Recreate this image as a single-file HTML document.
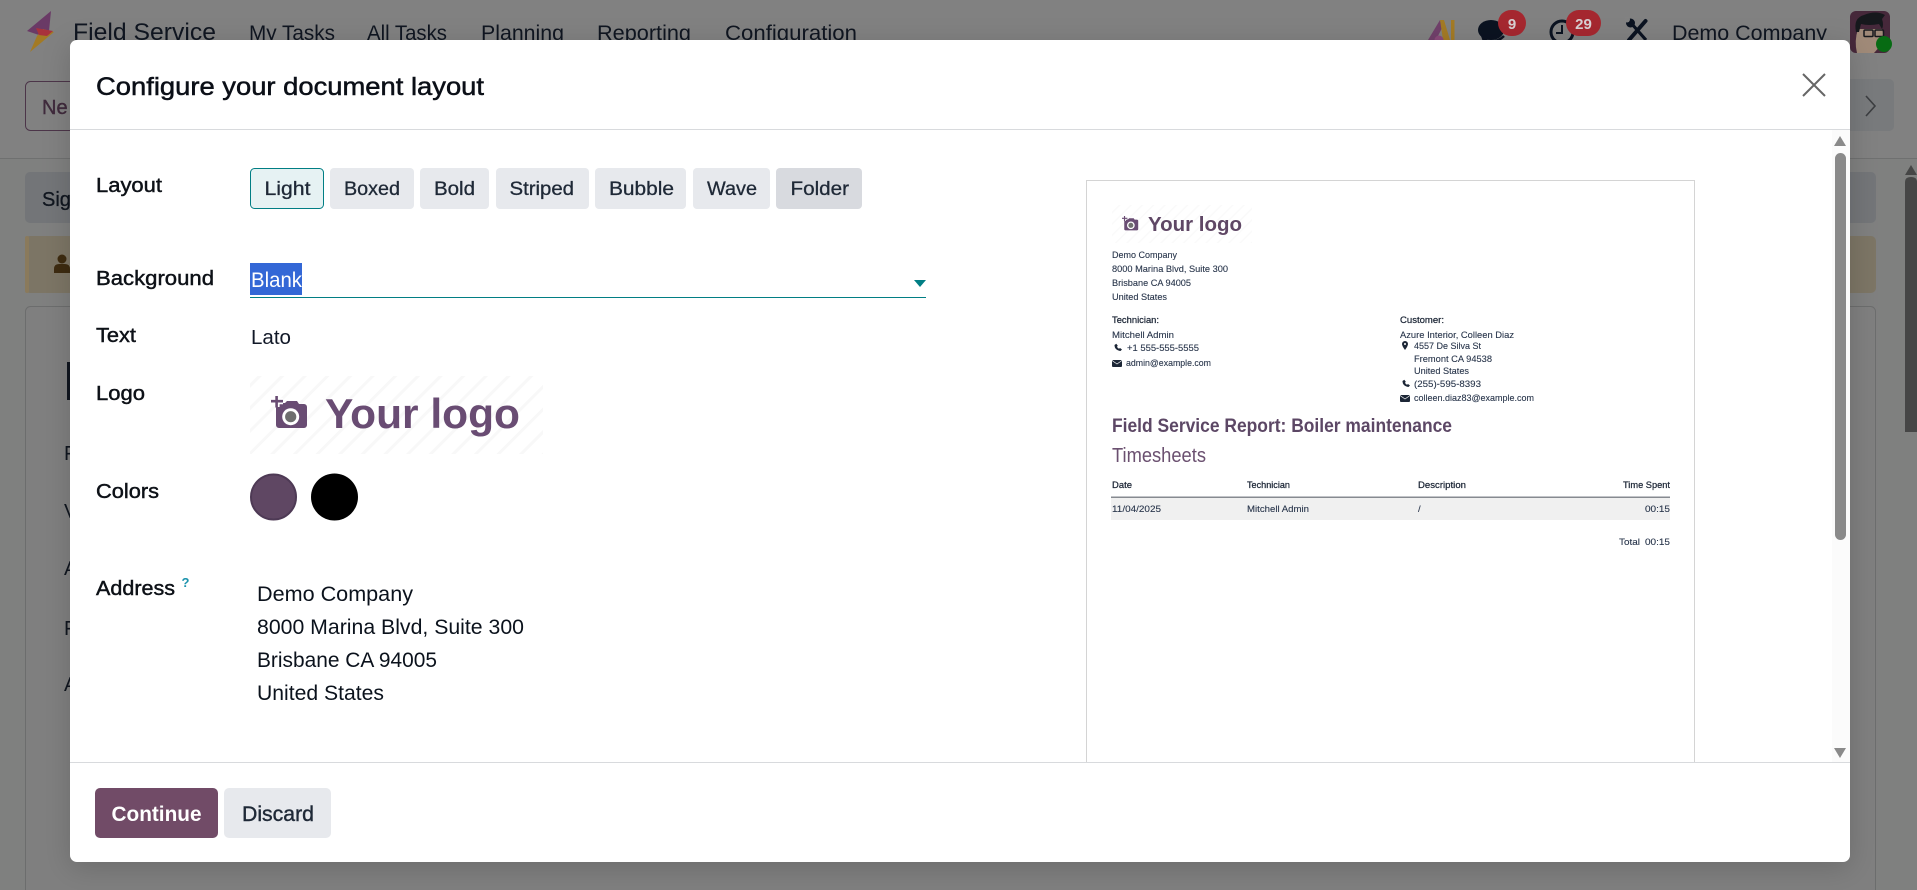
<!DOCTYPE html>
<html lang="en"><head><meta charset="utf-8"><title>Configure your document layout</title>
<style>
html,body{margin:0;padding:0;width:1917px;height:890px;overflow:hidden;background:#7f807f}
svg{display:block}
text{font-family:"Liberation Sans",sans-serif;white-space:pre}
.l{font-size:20px;fill:#0d1117;stroke:#0d1117;stroke-width:.45}
.b{font-size:19px;fill:#1f2937;stroke:#1f2937;stroke-width:.3}
.a{font-size:20px;fill:#111827}
.n{font-size:21px;fill:#0b121c}
.s{font-size:9.5px;fill:#27344a;stroke:#27344a;stroke-width:.1}
.sb{font-size:9.5px;fill:#1c2636;stroke:#1c2636;stroke-width:.25}
</style></head><body>
<svg width="1917" height="890" viewBox="0 0 1917 890" xmlns="http://www.w3.org/2000/svg">
<defs>
<pattern id="st" width="16" height="16" patternUnits="userSpaceOnUse" patternTransform="rotate(45)"><rect width="16" height="16" fill="#fff"/><rect x="0" width="3" height="16" fill="#f8f8f8"/></pattern>
<pattern id="st2" width="8" height="8" patternUnits="userSpaceOnUse" patternTransform="rotate(45)"><rect width="8" height="8" fill="#fff"/><rect x="0" width="1.5" height="8" fill="#fafafa"/></pattern>
<g id="cam">
<path d="M7 7h7l2-2h10l2 3h5a3 3 0 0 1 3 3v18a3 3 0 0 1-3 3H8a3 3 0 0 1-3-3V12z" fill="#694c73"/>
<path d="M0 5.2h12M5.6 0v11" stroke="#fff" stroke-width="6"/>
<path d="M0 5.2h12M5.6 0v11.5" stroke="#694c73" stroke-width="2.6"/>
<circle cx="19.7" cy="20.7" r="8.5" fill="#fff"/><circle cx="19.7" cy="20.7" r="5.6" fill="#6e6e6e"/>
</g>
<filter id="sh" x="-5%" y="-5%" width="110%" height="115%"><feDropShadow dx="0" dy="6" stdDeviation="14" flood-color="#000" flood-opacity=".16"/></filter>
</defs>

<!-- background page -->
<rect width="1917" height="890" fill="#7f807f"/>
<rect width="1917" height="158" fill="#818181"/>
<rect y="158" width="1917" height="1" fill="#6f7070"/>
<path d="M51 11 27 31 39 35 49 31z" fill="#6a3a66"/>
<path d="M30 52 54 32 43 29 37 36z" fill="#a37a24"/>
<path d="M36 28 53 31 47 36 39 35z" fill="#a8323c"/>
<text x="73" y="40" font-size="24" fill="#0f1520" textLength="143" lengthAdjust="spacingAndGlyphs">Field Service</text>
<g font-size="21" fill="#0f1520">
<text x="249" y="40" textLength="86" lengthAdjust="spacingAndGlyphs">My Tasks</text>
<text x="367" y="40" textLength="80" lengthAdjust="spacingAndGlyphs">All Tasks</text>
<text x="481" y="40" textLength="83" lengthAdjust="spacingAndGlyphs">Planning</text>
<text x="597" y="40" textLength="94" lengthAdjust="spacingAndGlyphs">Reporting</text>
<text x="725" y="40" textLength="132" lengthAdjust="spacingAndGlyphs">Configuration</text>
<text x="1672" y="40" textLength="155" lengthAdjust="spacingAndGlyphs">Demo Company</text>
</g>
<!-- AI -->
<path d="M1428 40 1440 20 1442 28 1436 40z" fill="#70406a"/><path d="M1440 20h4l6 20h-7z" fill="#a37a24"/><rect x="1451" y="20" width="3.5" height="20" fill="#a37a24"/><circle cx="1439" cy="40" r="4.500" fill="#8a4a7a"/>
<!-- chat -->
<ellipse cx="1491" cy="30" rx="13" ry="10" fill="#0a1220"/><path d="M1481 36 1483 42 1490 38z" fill="#0a1220"/><path d="M1484 40q12 4 20-4" stroke="#0a1220" stroke-width="2.5" fill="none"/>
<rect x="1498" y="10" width="28" height="26" rx="13" fill="#a5272f"/>
<text x="1512" y="29" text-anchor="middle" font-size="15" font-weight="bold" fill="#d8d0d2">9</text>
<!-- clock -->
<circle cx="1562" cy="32" r="11" fill="none" stroke="#0a1220" stroke-width="3"/><path d="M1562 25v8h-6" stroke="#0a1220" stroke-width="2" fill="none"/>
<rect x="1566" y="10" width="35" height="26" rx="13" fill="#a5272f"/>
<text x="1583.500" y="29" text-anchor="middle" font-size="15" font-weight="bold" fill="#d8d0d2">29</text>
<!-- tools -->
<path d="M1631 23 1646 40" stroke="#0a1220" stroke-width="3.200" fill="none"/>
<circle cx="1630.500" cy="23" r="4.500" fill="#0a1220"/><circle cx="1627" cy="19.500" r="3" fill="#828282"/>
<path d="M1645.500 21 1629 40" stroke="#0a1220" stroke-width="4" stroke-linecap="round" fill="none"/>
<!-- avatar -->
<rect x="1850" y="11" width="40" height="42" rx="6" fill="#46283a"/>
<path d="M1857 53q-3-12 1-24h24q3 8 0 15l-8 9z" fill="#a08a78"/>
<path d="M1856 32q-3-14 8-17 12-5 21 0l-3 4q2 6 0 10l-3-5q-10 2-18 0l-2 8z" fill="#16181c"/>
<rect x="1864" y="30" width="9" height="6.500" rx="1" fill="none" stroke="#16181c" stroke-width="1.500"/><rect x="1875" y="30" width="8.500" height="6.500" rx="1" fill="none" stroke="#16181c" stroke-width="1.500"/>
<circle cx="1884" cy="44" r="8" fill="#076b13"/>
<!-- control panel -->
<rect x="25.500" y="81.500" width="70" height="49" rx="5" fill="none" stroke="#4c3549"/>
<text x="42" y="114" font-size="20" fill="#3f2a3c" stroke="#3f2a3c" stroke-width=".4">Ne</text>
<rect x="1820" y="79" width="74" height="52" rx="5" fill="#787a7c"/>
<path d="M1866 96l9 10-9 10" fill="none" stroke="#3b3d40" stroke-width="1.600"/>
<rect x="25" y="172" width="1851" height="51" rx="5" fill="#737578"/>
<text x="42" y="206" font-size="20" fill="#10161f" stroke="#10161f" stroke-width=".3">Sig</text>
<rect x="25" y="236" width="1851" height="57" rx="5" fill="#7c7565"/>
<rect x="25" y="236" width="4" height="57" rx="2" fill="#8a7a5c"/>
<circle cx="62" cy="259" r="4.500" fill="#3d2b10"/><path d="M54 273v-4q0-5 5-5h6q5 0 5 5v4z" fill="#3d2b10"/>
<rect x="25.500" y="306.500" width="1850" height="600" rx="5" fill="#7f7f7f" stroke="#6c6d6d"/>
<rect x="67" y="362" width="3" height="38" fill="#10161f"/>
<g font-size="20" fill="#10161f">
<text x="64" y="460">F</text><text x="64" y="518">V</text><text x="64" y="575">A</text><text x="64" y="635">F</text><text x="64" y="691">A</text>
</g>
<path d="M1905 182q0-5 6-5t6 5v250h-12z" fill="#464646"/>
<path d="M1905 175 1911 165 1917 175z" fill="#464646"/>

<!-- modal -->
<rect x="70" y="40" width="1780" height="822" rx="7" fill="#fff" filter="url(#sh)"/>
<text x="96" y="95" font-size="25" fill="#0b0f17" stroke="#0b0f17" stroke-width=".5" textLength="388" lengthAdjust="spacingAndGlyphs">Configure your document layout</text>
<path d="M1803 74 1825 96M1825 74 1803 96" stroke="#666" stroke-width="2" fill="none"/>
<rect x="70" y="129" width="1780" height="1" fill="#d8dadd"/>
<rect x="1832" y="130" width="18" height="632" fill="#fbfbfb"/>
<path d="M1834 146 1840 136 1846 146z" fill="#8a8a8a"/>
<rect x="1835" y="153" width="11" height="387" rx="5.500" fill="#8a8a8a"/>
<path d="M1834 748 1840 758 1846 748z" fill="#8a8a8a"/>
<rect x="70" y="762" width="1780" height="1" fill="#d8dadd"/>

<!-- labels -->
<text class="l" x="96" y="192" textLength="66" lengthAdjust="spacingAndGlyphs">Layout</text>
<text class="l" x="96" y="285" textLength="118" lengthAdjust="spacingAndGlyphs">Background</text>
<text class="l" x="96" y="342" textLength="40" lengthAdjust="spacingAndGlyphs">Text</text>
<text class="l" x="96" y="400" textLength="49" lengthAdjust="spacingAndGlyphs">Logo</text>
<text class="l" x="96" y="498" textLength="63" lengthAdjust="spacingAndGlyphs">Colors</text>
<text class="l" x="96" y="595" textLength="79" lengthAdjust="spacingAndGlyphs">Address</text>
<text x="181.500" y="587" font-size="13" font-weight="bold" fill="#1b93ad">?</text>

<!-- layout buttons -->
<rect x="250.500" y="168.500" width="73" height="40" rx="4" fill="#e6f2f3" stroke="#017e84"/>
<rect x="330" y="168" width="84" height="41" rx="4" fill="#e7e9ed"/>
<rect x="420" y="168" width="69" height="41" rx="4" fill="#e7e9ed"/>
<rect x="496" y="168" width="93" height="41" rx="4" fill="#e7e9ed"/>
<rect x="595" y="168" width="91" height="41" rx="4" fill="#e7e9ed"/>
<rect x="693" y="168" width="77" height="41" rx="4" fill="#e7e9ed"/>
<rect x="776" y="168" width="86" height="41" rx="4" fill="#d8dadf"/>
<text class="b" x="264.500" y="195" textLength="46" lengthAdjust="spacingAndGlyphs">Light</text>
<text class="b" x="344" y="195" textLength="56" lengthAdjust="spacingAndGlyphs">Boxed</text>
<text class="b" x="434" y="195" textLength="41" lengthAdjust="spacingAndGlyphs">Bold</text>
<text class="b" x="509.500" y="195" textLength="64.500" lengthAdjust="spacingAndGlyphs">Striped</text>
<text class="b" x="609" y="195" textLength="65" lengthAdjust="spacingAndGlyphs">Bubble</text>
<text class="b" x="707" y="195" textLength="50" lengthAdjust="spacingAndGlyphs">Wave</text>
<text class="b" x="790.500" y="195" textLength="58.500" lengthAdjust="spacingAndGlyphs">Folder</text>

<!-- background select -->
<rect x="250" y="263" width="52" height="32" fill="#3367d6"/>
<text x="251" y="287" font-size="21" fill="#fff" textLength="51" lengthAdjust="spacingAndGlyphs">Blank</text>
<rect x="250" y="297" width="676" height="1" fill="#017e84"/>
<path d="M914 280h12l-6 7z" fill="#017e84"/>

<text class="a" x="251" y="344" textLength="40" lengthAdjust="spacingAndGlyphs">Lato</text>

<!-- logo -->
<rect x="250" y="376" width="293" height="78" fill="url(#st)"/>
<use href="#cam" transform="translate(271 396)"/>
<text x="325" y="428" font-size="42" font-weight="bold" fill="#694c73" textLength="195" lengthAdjust="spacingAndGlyphs">Your logo</text>

<!-- colors -->
<circle cx="273.500" cy="497" r="22.500" fill="#5f4763" stroke="#4e3a55" stroke-width="2"/>
<circle cx="334.500" cy="497" r="23.500" fill="#000"/>

<!-- address -->
<text class="n" x="257" y="601" textLength="156" lengthAdjust="spacingAndGlyphs">Demo Company</text>
<text class="n" x="257" y="634" textLength="267" lengthAdjust="spacingAndGlyphs">8000 Marina Blvd, Suite 300</text>
<text class="n" x="257" y="667" textLength="180" lengthAdjust="spacingAndGlyphs">Brisbane CA 94005</text>
<text class="n" x="257" y="700" textLength="127" lengthAdjust="spacingAndGlyphs">United States</text>

<!-- footer -->
<rect x="95" y="788" width="123" height="50" rx="5" fill="#714b67"/>
<text x="111.500" y="821" font-size="21" font-weight="bold" fill="#fff" textLength="90" lengthAdjust="spacingAndGlyphs">Continue</text>
<rect x="224" y="788" width="107" height="50" rx="5" fill="#e7e9ed"/>
<text x="242" y="821" font-size="21" fill="#1f2937" stroke="#1f2937" stroke-width=".4" textLength="72" lengthAdjust="spacingAndGlyphs">Discard</text>

<!-- preview -->
<path d="M1086.500 762V180.500H1694.500V762" fill="#fff" stroke="#d4d4d4"/>
<rect x="1112" y="205" width="140" height="38" fill="url(#st2)"/>
<use href="#cam" transform="translate(1122 216) scale(.45)"/>
<text x="1148" y="231" font-size="20" font-weight="bold" fill="#5f4765" textLength="94" lengthAdjust="spacingAndGlyphs">Your logo</text>

<text class="s" x="1112" y="258" textLength="65" lengthAdjust="spacingAndGlyphs">Demo Company</text>
<text class="s" x="1112" y="272" textLength="116" lengthAdjust="spacingAndGlyphs">8000 Marina Blvd, Suite 300</text>
<text class="s" x="1112" y="286" textLength="79" lengthAdjust="spacingAndGlyphs">Brisbane CA 94005</text>
<text class="s" x="1112" y="300" textLength="55" lengthAdjust="spacingAndGlyphs">United States</text>

<text class="sb" x="1112" y="323" textLength="47" lengthAdjust="spacingAndGlyphs">Technician:</text>
<text class="s" x="1112" y="338" textLength="62" lengthAdjust="spacingAndGlyphs">Mitchell Admin</text>
<path d="M1114.500 345q0 5 6 6l1.500-1.500-2-1.500-1 .7q-1.500-.8-2-2l.8-1-1.500-2z" fill="#1c2636"/>
<text class="s" x="1127" y="351" textLength="72" lengthAdjust="spacingAndGlyphs">+1 555-555-5555</text>
<rect x="1112" y="360" width="10" height="7" rx="1" fill="#1c2636"/><path d="M1112 360.500l5 3.500 5-3.500" stroke="#fff" stroke-width=".7" fill="none"/>
<text class="s" x="1126" y="366" textLength="85" lengthAdjust="spacingAndGlyphs">admin@example.com</text>

<text class="sb" x="1400" y="323" textLength="44" lengthAdjust="spacingAndGlyphs">Customer:</text>
<text class="s" x="1400" y="338" textLength="114" lengthAdjust="spacingAndGlyphs">Azure Interior, Colleen Diaz</text>
<path d="M1405 341a3 3 0 0 1 3 3q0 2-3 6-3-4-3-6a3 3 0 0 1 3-3z" fill="#1c2636"/><circle cx="1405" cy="344" r="1" fill="#fff"/>
<text class="s" x="1414" y="349" textLength="67" lengthAdjust="spacingAndGlyphs">4557 De Silva St</text>
<text class="s" x="1414" y="362" textLength="78" lengthAdjust="spacingAndGlyphs">Fremont CA 94538</text>
<text class="s" x="1414" y="374" textLength="55" lengthAdjust="spacingAndGlyphs">United States</text>
<path d="M1402.500 381q0 5 6 6l1.500-1.500-2-1.500-1 .7q-1.500-.8-2-2l.8-1-1.500-2z" fill="#1c2636"/>
<text class="s" x="1414" y="387" textLength="67" lengthAdjust="spacingAndGlyphs">(255)-595-8393</text>
<rect x="1400" y="395" width="10" height="7" rx="1" fill="#1c2636"/><path d="M1400 395.500l5 3.500 5-3.500" stroke="#fff" stroke-width=".7" fill="none"/>
<text class="s" x="1414" y="401" textLength="120" lengthAdjust="spacingAndGlyphs">colleen.diaz83@example.com</text>

<text x="1112" y="432" font-size="19" font-weight="bold" fill="#5c4765" textLength="340" lengthAdjust="spacingAndGlyphs">Field Service Report: Boiler maintenance</text>
<text x="1112" y="462" font-size="20" fill="#6b5070" textLength="94" lengthAdjust="spacingAndGlyphs">Timesheets</text>

<text class="sb" x="1112" y="488" textLength="20" lengthAdjust="spacingAndGlyphs">Date</text>
<text class="sb" x="1247" y="488" textLength="43" lengthAdjust="spacingAndGlyphs">Technician</text>
<text class="sb" x="1418" y="488" textLength="48" lengthAdjust="spacingAndGlyphs">Description</text>
<text class="sb" x="1623" y="488" textLength="47" lengthAdjust="spacingAndGlyphs">Time Spent</text>
<rect x="1111" y="498" width="559" height="22" fill="#f0f0f0"/>
<rect x="1111" y="496.500" width="559" height="1.500" fill="#868a90"/>
<text class="s" x="1112" y="512" textLength="49" lengthAdjust="spacingAndGlyphs">11/04/2025</text>
<text class="s" x="1247" y="512" textLength="62" lengthAdjust="spacingAndGlyphs">Mitchell Admin</text>
<text class="s" x="1418" y="512">/</text>
<text class="s" x="1645" y="512" textLength="25" lengthAdjust="spacingAndGlyphs">00:15</text>
<text class="s" x="1619" y="545" textLength="21" lengthAdjust="spacingAndGlyphs">Total</text>
<text class="s" x="1645" y="545" textLength="25" lengthAdjust="spacingAndGlyphs">00:15</text>
</svg>
</body></html>
